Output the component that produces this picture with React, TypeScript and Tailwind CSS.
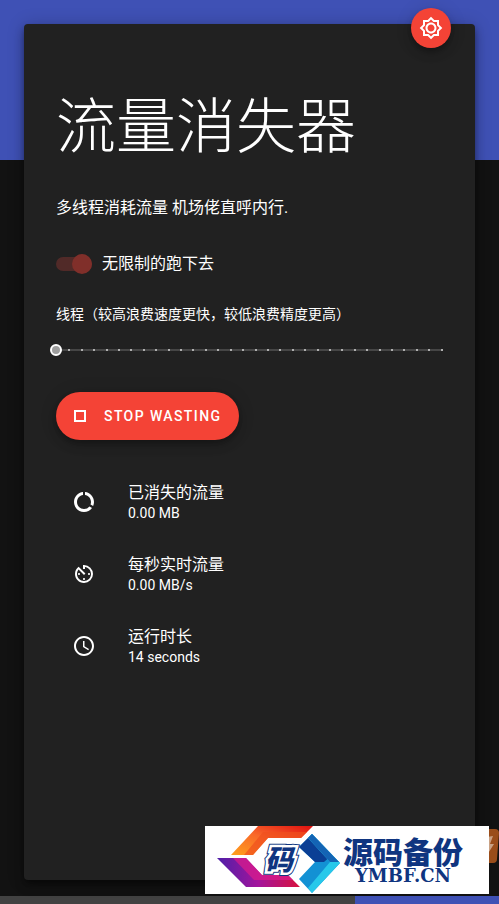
import { useState } from 'react';
import {
  MdAccessTime,
  MdAvTimer,
  MdDataUsage,
  MdOutlineBrightness5,
} from 'react-icons/md';

const MAX_THREADS = 32;

const Watermark = () => (
  <a
    href="#backup"
    className="fixed right-2.5 bottom-2.5 z-20 flex h-17 w-71 items-center bg-white text-[#0f3580]"
  >
    <svg viewBox="0 0 138 68" className="h-17 w-[138px] flex-none" aria-hidden="true">
      <defs>
        <linearGradient id="warm" x1="0" y1="1" x2="1" y2="0">
          <stop offset="0" stopColor="#ffa01c" />
          <stop offset="0.5" stopColor="#f9682a" />
          <stop offset="1" stopColor="#e01010" />
        </linearGradient>
        <linearGradient id="violet" x1="0" y1="0" x2="1" y2="0">
          <stop offset="0" stopColor="#4f1fa8" />
          <stop offset="0.5" stopColor="#a3149c" />
          <stop offset="1" stopColor="#d8123c" />
        </linearGradient>
      </defs>
      <path d="M26 29 53 0h55L96 12H63L48 29z" fill="url(#warm)" />
      <path d="M39 29 58 6h44l-6 6H63L48 29z" fill="#f0501e" opacity="0.7" />
      <path d="M12 32h29l16 17h26l12 12H41z" fill="url(#violet)" />
      <path d="M28 32h13l16 17h26l5 5H49z" fill="#d81b8c" opacity="0.75" />
      <path d="M107 8 94 21l16 15-16 17 13 14 28-30z" fill="#1391d4" />
      <path d="M107 8 94 21l16 15h9l8-7z" fill="#0a3f95" />
      <path d="M107 8l-4 4 22 24-22 26 4 5 28-30z" fill="#27c8ea" />
      <path d="M107 8l-4 4 22 24h9z" fill="#1464b4" />
      <text
        x="74"
        y="44"
        textAnchor="middle"
        fontSize="28"
        fontWeight="900"
        fontStyle="italic"
        fill="#0f3580"
        stroke="#0f3580"
        strokeWidth="7"
        fontFamily="'Noto Sans CJK SC', sans-serif"
      >
        码
      </text>
      <text
        x="74"
        y="44"
        textAnchor="middle"
        fontSize="28"
        fontWeight="900"
        fontStyle="italic"
        fill="#0f3580"
        stroke="#fff"
        strokeWidth="5"
        paintOrder="stroke"
        fontFamily="'Noto Sans CJK SC', sans-serif"
      >
        码
      </text>
    </svg>
    <span className="flex flex-col items-center">
      <span className="font-['Noto_Sans_CJK_SC',sans-serif] text-3xl leading-7 font-black">
        源码备份
      </span>
      <span className="pt-1 font-['DejaVu_Serif',serif] text-lg leading-4 font-bold">YMBF.CN</span>
    </span>
  </a>
);

const App = () => {
  const [unlimited, setUnlimited] = useState(true);
  const [threads, setThreads] = useState(1);
  const [running, setRunning] = useState(true);

  const stats = [
    { icon: <MdDataUsage className="size-6" />, label: '已消失的流量', value: '0.00 MB' },
    { icon: <MdAvTimer className="size-6" />, label: '每秒实时流量', value: '0.00 MB/s' },
    { icon: <MdAccessTime className="size-6" />, label: '运行时长', value: '14 seconds' },
  ];

  return (
    <div className="flex min-h-screen flex-col bg-[#121212] font-[Roboto,'Noto_Sans_CJK_SC',sans-serif] text-white">
      <header className="h-40 flex-none bg-[#3f51b5]" />

      <main className="relative mx-6 -mt-34 mb-4 flex-1 rounded bg-[#212121] px-8 pt-17 pb-8 shadow-[0_3px_5px_-1px_rgba(0,0,0,0.3),0_6px_10px_rgba(0,0,0,0.25),0_1px_18px_rgba(0,0,0,0.2)]">
        <button
          type="button"
          aria-label="Toggle theme"
          className="absolute -top-4 right-6 flex size-10 items-center justify-center rounded-full bg-[#f44336] shadow-[0_3px_5px_-1px_rgba(0,0,0,0.2),0_6px_10px_rgba(0,0,0,0.14),0_1px_18px_rgba(0,0,0,0.12)]"
        >
          <MdOutlineBrightness5 className="size-6" />
        </button>

        <h1 className="text-[60px] leading-[72px] font-light">流量消失器</h1>
        <p className="mt-8 text-base leading-6">多线程消耗流量 机场佬直呼内行.</p>

        {/* Unlimited switch */}
        <label className="mt-8 flex h-6 items-center gap-2.5">
          <input
            type="checkbox"
            role="switch"
            className="peer sr-only"
            checked={unlimited}
            onChange={(e) => setUnlimited(e.target.checked)}
          />
          <span className="flex h-3.5 w-9 items-center rounded-full bg-[#512a28] peer-checked:justify-end">
            <span className="size-5 rounded-full bg-[#802f2a]" />
          </span>
          <span className="text-base">无限制的跑下去</span>
        </label>

        {/* Thread count */}
        <label htmlFor="threads" className="mt-7 block text-sm leading-5">
          线程（较高浪费速度更快，较低浪费精度更高）
        </label>
        <div className="relative mt-3.5 flex h-6 items-center">
          <div className="flex h-0.5 w-full items-center justify-between bg-[#464646]">
            {Array.from({ length: MAX_THREADS }, (_, i) => (
              <span key={i} className="size-0.5 bg-[#b0b0b0]" />
            ))}
          </div>
          <input
            id="threads"
            type="range"
            min={1}
            max={MAX_THREADS}
            value={threads}
            onChange={(e) => setThreads(Number(e.target.value))}
            className="absolute inset-y-0 -right-1.5 -left-1.5 appearance-none bg-transparent [&::-webkit-slider-thumb]:size-3 [&::-webkit-slider-thumb]:appearance-none [&::-webkit-slider-thumb]:rounded-full [&::-webkit-slider-thumb]:border-2 [&::-webkit-slider-thumb]:border-white [&::-webkit-slider-thumb]:bg-[#9e9e9e]"
          />
        </div>

        <button
          type="button"
          onClick={() => setRunning(!running)}
          className="mt-7.5 flex h-12 items-center gap-3 rounded-full bg-[#f44336] pr-4.5 pl-3 text-sm font-medium tracking-widest shadow-[0_3px_5px_-1px_rgba(0,0,0,0.2),0_6px_10px_rgba(0,0,0,0.14),0_1px_18px_rgba(0,0,0,0.12)]"
        >
          <svg viewBox="0 0 24 24" className="size-6" fill="currentColor" aria-hidden="true">
            {running ? <path d="M16 8v8H8V8h8m2-2H6v12h12V6z" /> : <path d="M8 5v14l11-7z" />}
          </svg>
          {running ? 'STOP WASTING' : 'START WASTING'}
        </button>

        {/* Statistics */}
        <ul className="mt-6.5">
          {stats.map((stat) => (
            <li key={stat.label} className="flex h-18 items-center gap-8 px-4">
              {stat.icon}
              <div className="pt-0.5">
                <div className="text-base leading-5">{stat.label}</div>
                <div className="text-sm leading-5">{stat.value}</div>
              </div>
            </li>
          ))}
        </ul>
      </main>

      <footer className="flex h-2 flex-none bg-[#424242]">
        <div className="ml-auto w-36 bg-[#3f51b5]" />
      </footer>

      {/* Badge tucked behind the watermark */}
      <svg
        viewBox="0 0 48 36"
        className="fixed right-0 bottom-10 z-10 h-9 w-12"
        aria-hidden="true"
      >
        <path d="M4 1h40q4 0 4 4l-2 26q0 4-4 4H4z" fill="#9a4d1a" />
        <path d="M36 9l6-1-3 8h4l-7 11z" fill="#c9a184" />
      </svg>
      <Watermark />
    </div>
  );
};

export default App;
